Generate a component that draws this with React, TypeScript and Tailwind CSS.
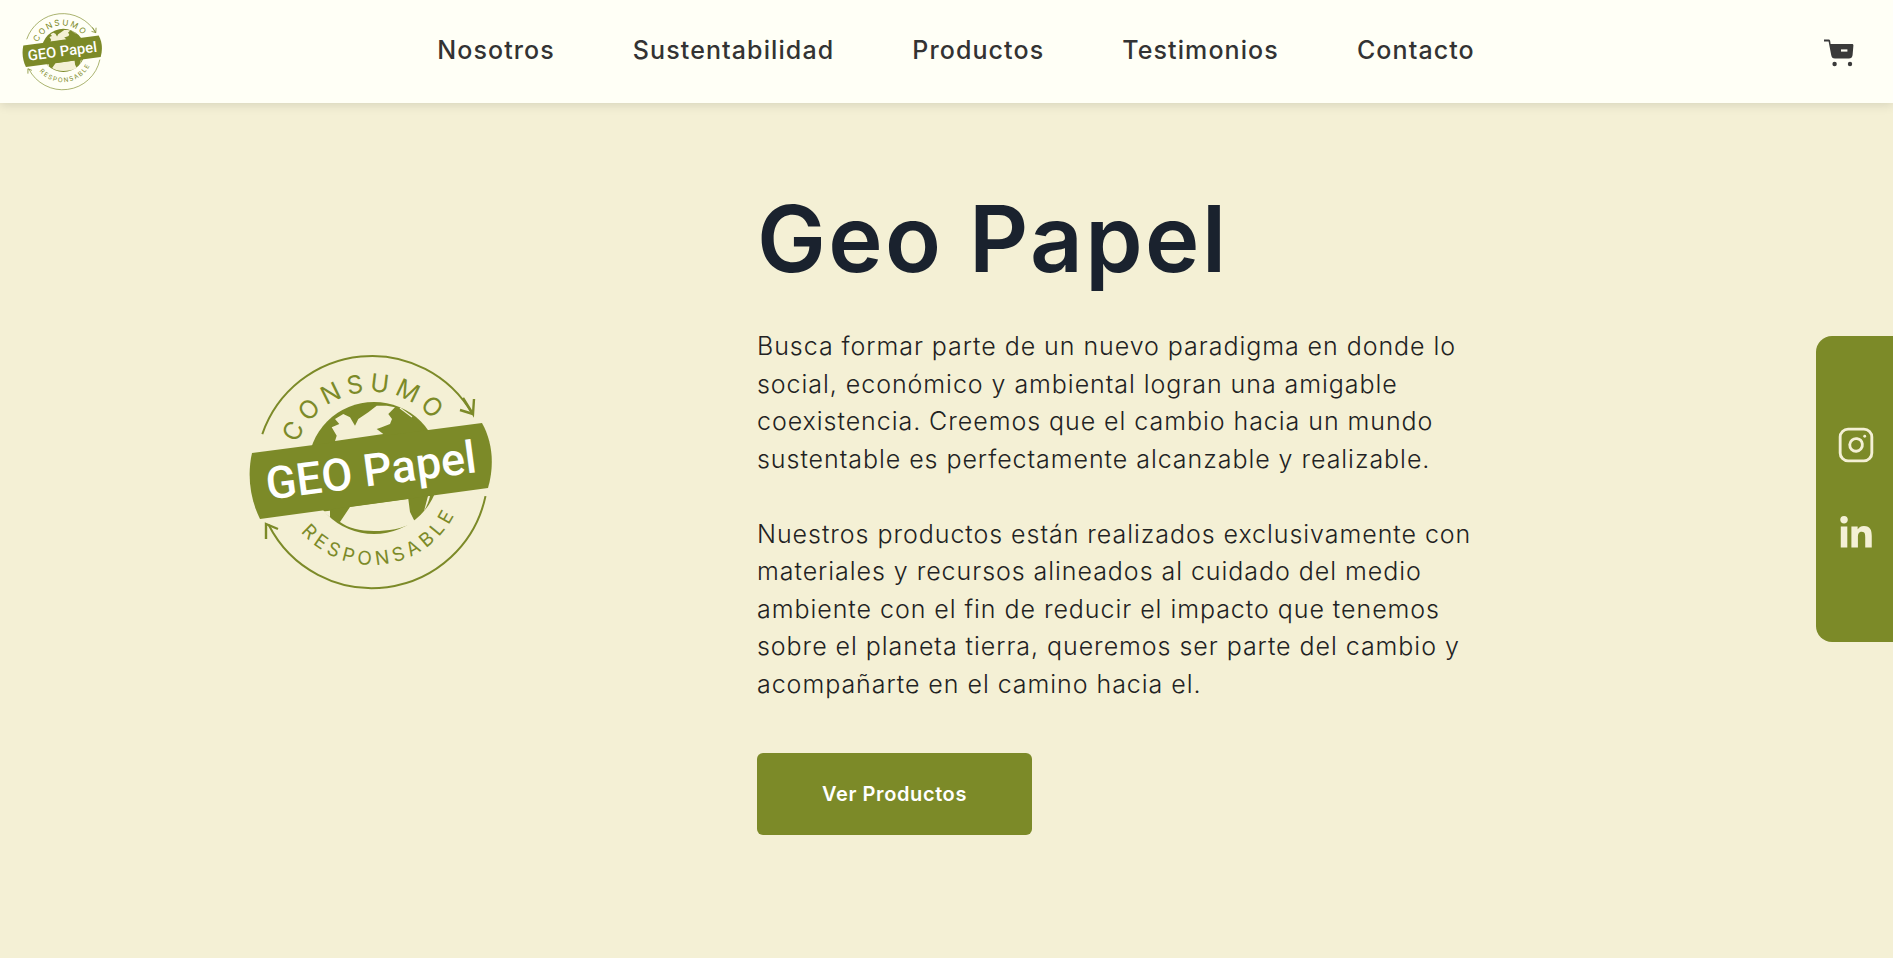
import { useId } from 'react';
import { Instagram } from 'lucide-react';
import { FaLinkedinIn } from 'react-icons/fa';

const GREEN = '#7c8a28';
const CREAM = '#f4f0d5';

const navLinks = ['Nosotros', 'Sustentabilidad', 'Productos', 'Testimonios', 'Contacto'];

// angle in degrees, 0 = up, clockwise
const pt = (deg: number, r: number) => {
    const a = (deg * Math.PI) / 180;
    return `${(152 + r * Math.sin(a)).toFixed(1)} ${(143 - r * Math.cos(a)).toFixed(1)}`;
};
const arc = (from: number, to: number, r: number, sweep: 0 | 1) =>
    `M ${pt(from, r)} A ${r} ${r} 0 ${Math.abs(to - from) > 180 ? 1 : 0} ${sweep} ${pt(to, r)}`;

function Logo({ className }: { className: string }) {
    const id = useId();
    return (
        <svg viewBox="28 25 247 238" className={className}>
            {/* outer arrows */}
            <path d={arc(-71, 60, 116, 1)} fill="none" stroke={GREEN} strokeWidth="2" />
            <path d="M243 69 L253 85 L254 70 M253 85 L240 81" fill="none" stroke={GREEN} strokeWidth="2.4" />
            <path d={arc(102, 243, 116, 1)} fill="none" stroke={GREEN} strokeWidth="2" />
            <path d="M46 210 L46 195 L58 200" fill="none" stroke={GREEN} strokeWidth="2.4" />

            {/* globe */}
            <circle cx="154" cy="139" r="66" fill={GREEN} />
            <path
                d="M115 112 L116.7 106.7 L111.7 98.3 L119.3 95 L115 90 L123.3 85 L130 88.3 L135 96.7 L138.3 90 L148.3 83.3 L156.7 76.7 L166.7 76.7 L175 78.3 L168.3 85 L172 90 L170 95 L161.7 98.3 L156.7 100 L163.3 105 Z"
                fill={CREAM}
            />
            <path d="M180 79 L192 88" fill="none" stroke={CREAM} strokeWidth="1.2" />
            <path
                d="M120 193 L130 178 L188.3 170 L190 183 L195 193 C182 200 168 202 154 202 C140 202 128 199 120 193 Z"
                fill={CREAM}
            />
            <path d="M103 182.5 L110 181.7 L110 188.3 Z" fill={CREAM} />
            <path d="M208 167 L204 182 C207 177 209 172 210 167 Z" fill={CREAM} />

            {/* band */}
            <path
                d="M32 124 L262 94 C272 112 275 135 268 159 L40 190 C30 170 27 146 32 124 Z"
                fill={GREEN}
            />
            <text
                x="151"
                y="157"
                textAnchor="middle"
                transform="rotate(-7.5 151 142)"
                fill="#ffffff"
                fontFamily="Roboto, sans-serif"
                fontWeight="500"
                fontSize="45"
            >
                GEO Papel
            </text>

            {/* ring text */}
            <defs>
                <path id={`${id}-top`} d={arc(-80, 64, 80, 1)} />
                <path id={`${id}-bottom`} d={arc(240, 105, 93, 0)} />
            </defs>
            <text fill={GREEN} fontFamily="Inter, sans-serif" fontSize="25" letterSpacing="5.5">
                <textPath href={`#${id}-top`} startOffset="50%" textAnchor="middle">
                    CONSUMO
                </textPath>
            </text>
            <text fill={GREEN} fontFamily="Inter, sans-serif" fontSize="19" letterSpacing="4.5">
                <textPath href={`#${id}-bottom`} startOffset="50%" textAnchor="middle">
                    RESPONSABLE
                </textPath>
            </text>
        </svg>
    );
}

function CartIcon() {
    return (
        <svg viewBox="0 0 32 32" className="h-8 w-8" fill="#3a3a3a">
            <path d="M1 3.5 H5.5 C6.5 3.5 7 4 7.2 5 L7.6 8 H29 C30 8 30.5 8.6 30.4 9.6 L29.6 19 C29.3 21.5 28 22.5 26 22.5 H12 C9.6 22.5 8.6 21.4 8.2 19 L5.6 5.5 H1 Z" />
            <rect x="18" y="13.4" width="6.4" height="2.2" fill="#fffff6" />
            <circle cx="11.6" cy="28" r="2.2" />
            <circle cx="27" cy="28" r="2.2" />
        </svg>
    );
}

export default function App() {
    return (
        <div className="relative min-h-[958px] bg-[#f4f0d5] font-['Inter',sans-serif]">
            <header className="relative flex h-[103px] items-center justify-between bg-[#fffff6] pl-[22px] pr-[38px] shadow-[0_2px_10px_rgba(0,0,0,0.12)]">
                <Logo className="h-[78px] w-[81px]" />
                <nav className="mb-[2px] mr-[14px] flex gap-[78px]">
                    {navLinks.map((link) => (
                        <a key={link} className="text-[25px] font-medium tracking-[1.1px] text-[#333333]">
                            {link}
                        </a>
                    ))}
                </nav>
                <CartIcon />
            </header>

            <main className="flex items-start pl-[248px] pt-[76px]">
                <Logo className="mr-[262px] mt-[175px] h-[238px] w-[247px]" />
                <div>
                    <h1 className="text-[92px] leading-[120px] font-semibold tracking-[2.4px] text-[#1a222e]">Geo Papel</h1>
                    <p className="mt-[29px] text-[25px] leading-[37.5px] font-[350] tracking-[0.95px] text-[#222222]">
                        Busca formar parte de un nuevo paradigma en donde lo
                        <br />
                        social, económico y ambiental logran una amigable
                        <br />
                        coexistencia. Creemos que el cambio hacia un mundo
                        <br />
                        sustentable es perfectamente alcanzable y realizable.
                        <br />
                        <br />
                        Nuestros productos están realizados exclusivamente con
                        <br />
                        materiales y recursos alineados al cuidado del medio
                        <br />
                        ambiente con el fin de reducir el impacto que tenemos
                        <br />
                        sobre el planeta tierra, queremos ser parte del cambio y
                        <br />
                        acompañarte en el camino hacia el.
                    </p>
                    <button className="mt-[50px] h-[82px] w-[275px] rounded-md bg-[#7c8a28] text-[20px] font-semibold tracking-[0.6px] text-white">
                        Ver Productos
                    </button>
                </div>
            </main>

            <aside className="absolute right-0 top-[336px] flex h-[306px] w-[77px] flex-col items-center gap-[52px] rounded-l-2xl bg-[#7c8a28] pt-[90px] pl-[3px] text-[#f4f0d5]">
                <Instagram size={38} strokeWidth={1.8} />
                <FaLinkedinIn size={36} />
            </aside>
        </div>
    );
}
